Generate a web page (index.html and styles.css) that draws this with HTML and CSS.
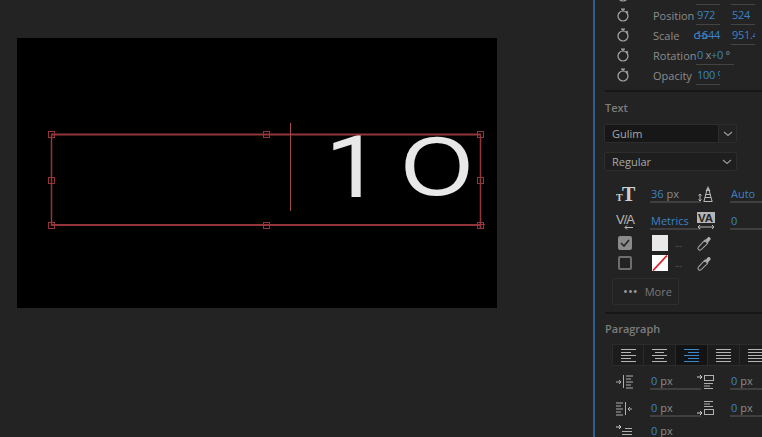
FILE: index.html
```html
<!DOCTYPE html>
<html lang="en">
<head>
<meta charset="utf-8">
<title>Essential Graphics</title>
<link rel="stylesheet" href="styles.css">
</head>
<body>
<svg class="defs" width="0" height="0">
  <symbol id="watch" viewBox="0 0 14 14"><circle cx="7" cy="8" r="5" fill="none" stroke="#a8a8a8" stroke-width="1.2"/><path d="M5 1.2h4M7 1.2v2M10.5 3l1.5 1.5" fill="none" stroke="#a8a8a8" stroke-width="1.2"/></symbol>
  <symbol id="drop" viewBox="0 0 16 16"><path d="M1.500 14.500c-.6-1-.5-2.200.2-3L8 4.800 11.200 8l-6.500 6.300c-1 .8-2.300 1-3.200.2z" fill="none" stroke="#a8a8a8" stroke-width="1.100"/><path d="M8 4l1.800-.6 1.900-2.100c1.300-1.100 3.800.9 2.600 2.700l-2 2-.6 1.800z" fill="#b0b0b0"/></symbol>
  <symbol id="chev" viewBox="0 0 10 6"><path d="M1 1l4 3.500L9 1" fill="none" stroke="#9a9a9a" stroke-width="1.100"/></symbol>
</svg>
<main class="app">
  <section class="monitor">
    <div class="stage">
      <span class="digit one">1</span>
      <span class="digit zero">O</span>
      <svg class="overlay" width="480" height="270" viewBox="0 0 480 270">
        <g fill="none" stroke="#93363b">
          <path d="M34 96.500H464M34 187H464" stroke-width="2"/>
          <path d="M34.500 97V188M463.500 97V190" stroke-width="1.500"/>
          <path d="M273.500 85V173" stroke="#a34a50"/>
          <path d="M459 186.500H468M463.500 182V191" stroke-width="1.200"/>
          <rect x="31.500" y="93.500" width="6" height="6"/>
          <rect x="246.500" y="93.500" width="6" height="6"/>
          <rect x="460.500" y="93.500" width="6" height="6"/>
          <rect x="31.500" y="139.500" width="6" height="6"/>
          <rect x="460.500" y="139.500" width="6" height="6"/>
          <rect x="31.500" y="184.500" width="6" height="6"/>
          <rect x="246.500" y="184.500" width="6" height="6"/>
          <rect x="460.500" y="184.500" width="6" height="6"/>
        </g>
      </svg>
    </div>
  </section>

  <aside class="panel">
    <div class="props">
      <div class="prop"><svg class="watch"><use href="#watch"/></svg><span class="prop-label"></span><span class="val"></span><span class="val"></span></div>
      <div class="prop"><svg class="watch"><use href="#watch"/></svg><span class="prop-label">Position</span><span class="val">972</span><span class="val">524</span></div>
      <div class="prop"><svg class="watch"><use href="#watch"/></svg><span class="prop-label">Scale</span><span class="val val-scale"><svg class="link" width="13" height="8" viewBox="0 0 13 8"><path d="M5 1.500H3a2.500 2.500 0 0 0 0 5h2M8 1.500h2a2.500 2.500 0 0 1 0 5H8M4 4h5" fill="none" stroke="#3b82c4" stroke-width="1.200"/></svg>1644</span><span class="val">951.4</span></div>
      <div class="prop"><svg class="watch"><use href="#watch"/></svg><span class="prop-label">Rotation</span><span class="val val-wide">0 <i>x</i>+0 <i>°</i></span></div>
      <div class="prop"><svg class="watch"><use href="#watch"/></svg><span class="prop-label">Opacity</span><span class="val val-plain">100 %</span></div>
    </div>

    <div class="block block-text">
      <h2 class="heading">Text</h2>
      <div class="select select-font"><span class="select-name">Gulim</span><span class="select-btn"><svg width="10" height="6"><use href="#chev"/></svg></span></div>
      <div class="select select-style"><span class="select-name">Regular</span><span class="select-btn plain"><svg width="10" height="6"><use href="#chev"/></svg></span></div>

      <div class="fields first">
        <svg class="ico ico-size" width="21" height="24" viewBox="0 0 21 24"><text x="0" y="19" class="ti small">T</text><text x="6" y="19" class="ti big">T</text></svg>
        <span class="field">36 <i>px</i></span>
        <svg class="ico2" width="18" height="18" viewBox="0 0 18 18"><path d="M3 9v7M1.500 10.500L3 9l1.500 1.500M1.500 14.500L3 16l1.500-1.500" fill="none" stroke="#bbb"/><path d="M11 1L8.500 6h5z" fill="#aaa"/><path d="M10 5l-3 11M12 5l3 11M6.500 16.500h9M8.500 9.500h5M8 12.500h6" fill="none" stroke="#bbb"/></svg>
        <span class="field">Auto</span>
      </div>
      <div class="fields second">
        <svg class="ico" width="20" height="18" viewBox="0 0 20 18"><text x="0" y="12" class="vatext">V/A</text><path d="M9 15.500h8M11 13.500l-2 2 2 2" fill="none" stroke="#bbb"/></svg>
        <span class="field">Metrics</span>
        <svg class="ico2" width="18" height="18" viewBox="0 0 18 18"><rect x="0" y="0" width="18" height="11" fill="#b5b5b5"/><text x="1" y="10" class="vadark">VA</text><path d="M1 15h16M3 13l-2 2 2 2M15 13l2 2-2 2" fill="none" stroke="#bbb"/></svg>
        <span class="field">0</span>
      </div>

      <div class="appearance appearance-first">
        <span class="check on"><svg width="10" height="8" viewBox="0 0 10 8"><path d="M1 4l3 3 5-6" fill="none" stroke="#232323" stroke-width="1.600"/></svg></span>
        <span class="swatch"></span><span class="dash">...</span><svg class="drop"><use href="#drop"/></svg>
      </div>
      <div class="appearance">
        <span class="check"></span>
        <span class="swatch none"><svg width="16" height="16" viewBox="0 0 16 16"><path d="M1 15.500L15 .5" stroke="#d8232a" stroke-width="1.800"/></svg></span><span class="dash">...</span><svg class="drop"><use href="#drop"/></svg>
      </div>
      <button class="more"><span class="dots">•••</span><span>More</span></button>
    </div>

    <div class="block block-para">
      <h2 class="heading">Paragraph</h2>
      <div class="aligns">
        <span class="al"><svg width="15" height="14"><path d="M0 1.500h15M0 4.500h10M0 7.500h15M0 10.500h10M0 13.500h15" stroke="#b5b5b5"/></svg></span>
        <span class="al"><svg width="15" height="14"><path d="M0 1.500h15M3 4.500h9M0 7.500h15M3 10.500h9M0 13.500h15" stroke="#b5b5b5"/></svg></span>
        <span class="al active"><svg width="15" height="14"><path d="M0 1.500h15M4 4.500h11M0 7.500h15M4 10.500h11M0 13.500h15" stroke="#3a86cf"/></svg></span>
        <span class="al"><svg width="15" height="14"><path d="M0 1.500h15M0 4.500h15M0 7.500h15M0 10.500h15M0 13.500h15" stroke="#b5b5b5"/></svg></span>
        <span class="al"><svg width="15" height="14"><path d="M0 1.500h15M0 4.500h15M0 7.500h15M0 10.500h15M0 13.500h15" stroke="#b5b5b5"/></svg></span>
      </div>
      <div class="fields para">
        <svg class="ico" width="17" height="15" viewBox="0 0 17 15"><path d="M0 8h5M3 6l2 2-2 2M7.500 1v13M10 2h7M10 5h5M10 8h7M10 11h5M10 14h7" fill="none" stroke="#b0b0b0"/></svg>
        <span class="field">0 <i>px</i></span>
        <svg class="ico2" width="17" height="15" viewBox="0 0 17 15"><path d="M0 3h5M3 1l2 2-2 2" fill="none" stroke="#d0d0d0"/><rect x="7.500" y="1.500" width="9" height="5" fill="none" stroke="#b0b0b0"/><path d="M7 9.500h9M7 12h6M7 14.500h9" stroke="#b0b0b0"/></svg>
        <span class="field">0 <i>px</i></span>
      </div>
      <div class="fields para">
        <svg class="ico" width="17" height="15" viewBox="0 0 17 15"><path d="M0 2h7M0 5h5M0 8h7M0 11h5M0 14h7M9.500 1v13M16 8h-4M14 6l-2 2 2 2" fill="none" stroke="#b0b0b0"/></svg>
        <span class="field">0 <i>px</i></span>
        <svg class="ico2" width="17" height="15" viewBox="0 0 17 15"><path d="M7 .5h9M7 3h6M7 5.500h9" stroke="#b0b0b0"/><path d="M0 12h5M3 10l2 2-2 2" fill="none" stroke="#d0d0d0"/><rect x="7.500" y="8.500" width="9" height="5" fill="none" stroke="#b0b0b0"/></svg>
        <span class="field">0 <i>px</i></span>
      </div>
      <div class="fields para last">
        <svg class="ico" width="17" height="15" viewBox="0 0 17 15"><path d="M0 3h5M3 1l2 2-2 2" fill="none" stroke="#d0d0d0"/><path d="M9 4.500h7M6 7.500h10M6 10.500h10M6 13.500h10" stroke="#b0b0b0"/></svg>
        <span class="field bare">0 <i>px</i></span>
      </div>
    </div>
  </aside>
</main>
</body>
</html>
```

FILE: styles.css
```css
* { box-sizing: border-box; }

html, body {
  margin: 0;
  height: 100%;
  overflow: hidden;
  background: #232323;
}

body {
  font-family: "Open Sans", "Noto Sans", sans-serif;
  font-size: 11px;
  color: #8c8c8c;
}

.defs { position: absolute; }

.app {
  display: flex;
  width: 762px;
  height: 437px;
  overflow: hidden;
}

.monitor {
  width: 593px;
  flex: none;
  padding: 38px 0 0 17px;
}

.stage {
  position: relative;
  width: 480px;
  height: 270px;
  background: #000;
  overflow: hidden;
}

.overlay {
  position: absolute;
  left: 0;
  top: 0;
}

.digit {
  position: absolute;
  font-family: "Roboto", "Liberation Sans", sans-serif;
  color: #e8e8e8;
  line-height: 1;
}

.one {
  left: 308px;
  top: 86px;
  font-size: 87px;
  font-weight: 400;
  transform: scaleX(1.15);
  transform-origin: left center;
}

.zero {
  left: 384px;
  top: 86px;
  font-family: "Liberation Sans", sans-serif;
  font-size: 84px;
  transform: scaleX(1.1);
  transform-origin: left center;
}

.panel {
  width: 169px;
  flex: none;
  height: 437px;
  border-left: 2px solid #2c5f8f;
  padding-left: 10px;
  overflow: hidden;
}

.props {
  margin-top: -15px;
  height: 107px;
  border-bottom: 2px solid #171717;
  margin-right: -10px;
}

.prop {
  display: flex;
  align-items: center;
  height: 20px;
}

.watch {
  width: 14px;
  height: 14px;
  margin-left: 11px;
  flex: none;
}

.prop-label {
  width: 43px;
  margin-left: 23px;
  flex: none;
  white-space: nowrap;
}

.val {
  position: relative;
  display: block;
  width: 24px;
  height: 19px;
  margin-right: 11px;
  flex: none;
  color: #3b82c4;
  line-height: 18px;
  letter-spacing: -0.3px;
  white-space: nowrap;
  overflow: hidden;
  border-bottom: 1px solid #444;
  padding-left: 1px;
  font-size: 11px;
}

.val-scale {
  overflow: visible;
  text-align: right;
  padding: 0;
  border-bottom-color: transparent;
}

.link {
  position: absolute;
  left: -2px;
  top: 6px;
}

.val-wide {
  width: 38px;
}

.val i {
  font-style: normal;
  color: #8c8c8c;
}

.block-text {
  height: 222px;
  border-bottom: 2px solid #171717;
  margin-right: -10px;
  padding-top: 8px;
}

.heading {
  margin: 0;
  height: 16px;
  font-size: 11px;
  line-height: 16px;
  font-weight: 600;
  color: #7c7c7c;
}

.select {
  display: flex;
  width: 133px;
  height: 19px;
  margin-left: -1px;
  background: #1a1a1a;
  border: 1px solid #2d2d2d;
  border-radius: 2px;
  color: #a8a8a8;
  line-height: 17px;
}

.select-font {
  margin-top: 8px;
  background: #171717;
}

.select-style {
  margin-top: 9px;
  background: #1e1e1e;
}

.select-name {
  flex: 1;
  padding-left: 7px;
}

.select-btn {
  display: flex;
  align-items: center;
  justify-content: center;
  width: 18px;
  background: #222;
  border-left: 1px solid #2d2d2d;
}

.select-btn.plain {
  background: none;
  border-left: 0;
}

.fields {
  display: grid;
  grid-template-columns: 45px 51px 29px 33px;
  align-items: center;
  height: 18px;
}

.fields.first { margin-top: 14px; }
.fields.second { margin-top: 9px; }

.ico {
  margin-left: 11px;
}

.ico-size {
  margin-top: -3px;
  margin-bottom: -3px;
}

.ico2 {
  margin-left: -4px;
}

.field {
  color: #3b82c4;
  font-size: 11px;
  line-height: 17px;
  height: 18px;
  padding-left: 1px;
  border-bottom: 2px solid #3f3f3f;
  white-space: nowrap;
}

.field.bare { border-bottom: 0; }

.field i {
  font-style: normal;
  color: #8c8c8c;
}

.ti {
  font-family: "Liberation Serif", serif;
  font-weight: 700;
  fill: #cfcfcf;
}

.ti.small { font-size: 10px; }
.ti.big { font-size: 20px; }

.vatext {
  font-family: "Liberation Sans", sans-serif;
  font-size: 13px;
  letter-spacing: -1px;
  fill: #b8b8b8;
}

.vadark {
  font-family: "Liberation Sans", sans-serif;
  font-size: 11.500px;
  font-weight: 700;
  fill: #232323;
}

.appearance {
  display: flex;
  align-items: center;
  height: 20px;
}

.appearance-first { margin-top: 3px; }

.check {
  display: flex;
  align-items: center;
  justify-content: center;
  width: 14px;
  height: 14px;
  margin-left: 13px;
  border: 2px solid #6e6e6e;
  border-radius: 2px;
}

.check.on { background: #8a8a8a; border-color: #8a8a8a; }

.swatch {
  display: block;
  width: 16px;
  height: 16px;
  margin-left: 20px;
  background: #e9e9e9;
}

.swatch.none { background: #fff; }
.swatch svg { display: block; }

.dash {
  width: 29px;
  padding-left: 7px;
  color: #6e6e6e;
  font-size: 9px;
}

.drop {
  width: 15px;
  height: 15px;
}

.more {
  display: flex;
  align-items: center;
  gap: 7px;
  width: 67px;
  height: 27px;
  margin: 5px 0 0 7px;
  padding: 0 0 0 10px;
  background: none;
  border: 1px solid #2e2e2e;
  border-radius: 2px;
  color: #787878;
  font: inherit;
}

.dots {
  font-size: 13px;
  line-height: 13px;
  letter-spacing: 0;
  color: #9a9a9a;
}

.block-para {
  padding-top: 7px;
}

.aligns {
  display: flex;
  margin: 7px 0 0 7px;
  height: 22px;
  width: 170px;
}

.al {
  display: flex;
  align-items: center;
  justify-content: center;
  width: 32px;
  flex: none;
  background: #1c1c1c;
  border: 1px solid #2b2b2b;
  border-left-width: 0;
}

.al:first-child { border-left-width: 1px; }
.al.active { background: #131313; }

.fields.para { margin-top: 9px; height: 18px; }
.aligns + .fields.para { margin-top: 6px; }
.fields.last { margin-top: 5px; }
```
